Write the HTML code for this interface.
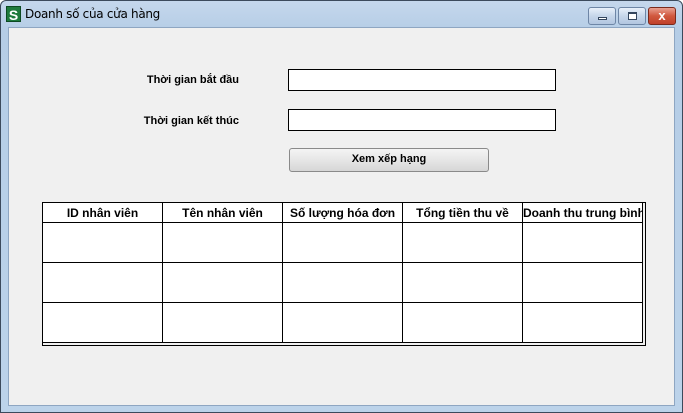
<!DOCTYPE html>
<html><head><meta charset="utf-8"><style>
*{margin:0;padding:0;box-sizing:border-box}
body{width:683px;height:413px;overflow:hidden;background:#fff;font-family:"Liberation Sans",sans-serif;position:relative}
.frame{position:absolute;left:0;top:0;width:683px;height:413px;border:1px solid #3c4a5c;border-radius:6px 6px 0 0;background:linear-gradient(#c5d7ec,#b5cde6 30px,#bcd3ea)}
.client{position:absolute;left:8px;top:27px;width:667px;height:379px;background:#f0f0f0;border:1px solid #8ea6c2}
.title{position:absolute;left:25px;top:7px;font-size:12px;color:#000;font-family:"DejaVu Sans","Liberation Sans",sans-serif;letter-spacing:-0.3px}
.icon{position:absolute;left:6px;top:6px;width:15px;height:16px;background:#1e7a3c;color:#fff;font-weight:bold;font-size:14px;line-height:16px;text-align:center;border:1px solid #0c4a22}
.tb{position:absolute;top:7px;height:18px;border:1px solid #6e86a6;border-radius:3px;background:linear-gradient(#e8f0fa,#c6d6ea 50%,#b2c6e0)}
.tb.close{background:linear-gradient(#e8a090,#d0583e 50%,#c0402a);border-color:#7a2a1c}
.lbl{position:absolute;font-size:11px;font-weight:bold;color:#000;text-align:right;width:140px}
.inp{position:absolute;left:288px;width:268px;height:22px;background:#fff;border:1px solid #000}
.btn{position:absolute;left:289px;top:148px;width:200px;height:24px;border:1px solid #8a8a8a;border-radius:3px;background:linear-gradient(#f4f4f4,#e6e6e6 50%,#d6d6d6);font-size:11px;font-weight:bold;text-align:center;line-height:21px}
table{position:absolute;left:42px;top:202px;width:601px;table-layout:fixed;border-collapse:collapse;border:1px solid #000;background:#fff}
td,th{border:1px solid #000;padding:0}
th{height:20px;font-size:12px;font-weight:bold;white-space:nowrap;overflow:hidden;background:#fff}
td{height:40px}
.dbl{position:absolute;left:42px;top:342px;width:604px;height:4px;border:1px solid #000;border-top:none}
.rline{position:absolute;left:642px;top:202px;width:4px;height:144px;border:1px solid #000;border-left:none}
</style></head><body>
<div class="frame"></div>
<div class="icon">S</div>
<div class="title">Doanh số của cửa hàng</div>
<div class="tb" style="left:588px;width:28px"><div style="position:absolute;left:9px;top:9px;width:9px;height:3px;border:1px solid #34465e;background:#fff"></div></div>
<div class="tb" style="left:618px;width:28px"><div style="position:absolute;left:9px;top:4px;width:9px;height:8px;border:1px solid #34465e;border-top-width:2px;background:#fff"></div></div>
<div class="tb close" style="left:648px;width:28px;color:#fff;font-weight:bold;font-size:13px;text-align:center;line-height:16px">x</div>
<div class="client"></div>
<div class="lbl" style="left:99px;top:74px">Thời gian bắt đầu</div>
<div class="lbl" style="left:99px;top:115px">Thời gian kết thúc</div>
<div class="inp" style="top:69px"></div>
<div class="inp" style="top:109px"></div>
<div class="btn">Xem xếp hạng</div>
<table>
<tr><th>ID nhân viên</th><th>Tên nhân viên</th><th>Số lượng hóa đơn</th><th>Tổng tiền thu về</th><th>Doanh thu trung bình</th></tr>
<tr><td></td><td></td><td></td><td></td><td></td></tr>
<tr><td></td><td></td><td></td><td></td><td></td></tr>
<tr><td></td><td></td><td></td><td></td><td></td></tr>
</table>
<div class="dbl"></div>
<div class="rline"></div>
</body></html>
